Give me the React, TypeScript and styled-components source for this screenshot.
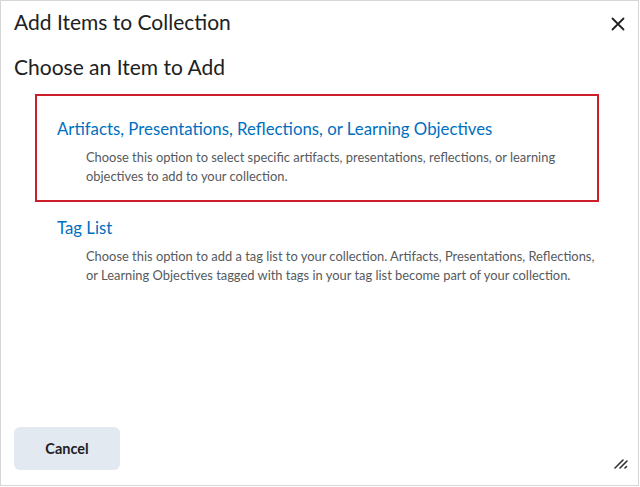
import React from "react";
import styled, { createGlobalStyle } from "styled-components";

const Global = createGlobalStyle`
  html, body { margin: 0; padding: 0; background: #fff; }
  body { font-family: Lato, "Noto Sans", sans-serif; }
  * { box-sizing: border-box; }
`;

const Dialog = styled.div`
  width: 639px;
  height: 486px;
  border: 1px solid #d6d6d6;
  background: #fff;
  display: flex;
  flex-direction: column;
  position: relative;
`;

const Header = styled.div`
  display: flex;
  align-items: flex-start;
  justify-content: space-between;
  padding: 7px 8px 0 13px;
`;

const Title = styled.h1`
  margin: 0;
  font-size: 21px;
  font-weight: 400;
  color: #202122;
  line-height: 28px;
`;

const CloseButton = styled.button`
  border: none;
  background: none;
  padding: 0;
  margin-top: 2px;
  width: 24px;
  height: 28px;
  display: flex;
  align-items: center;
  justify-content: center;
  cursor: pointer;
`;

const Body = styled.div`
  flex: 1;
  padding: 15px 13px 0 13px;
  display: flex;
  flex-direction: column;
`;

const Heading = styled.h2`
  margin: 0;
  font-size: 21px;
  font-weight: 400;
  color: #202122;
  line-height: 28px;
`;

const OptionList = styled.div`
  margin: 36px 0 0 43px;
  width: 542px;
  display: flex;
  flex-direction: column;
  gap: 30px;
`;

const Option = styled.div<{ $highlighted?: boolean }>`
  position: relative;

  &::after {
    content: "";
    display: ${(p) => (p.$highlighted ? "block" : "none")};
    position: absolute;
    top: -23px;
    bottom: -16px;
    left: -22px;
    right: 0;
    border: 2px solid #cd1f2b;
    pointer-events: none;
  }
`;

const OptionLink = styled.a`
  display: block;
  font-size: 16.8px;
  color: #006fbf;
  text-decoration: none;
  line-height: 24px;
  cursor: pointer;
`;

const OptionText = styled.p`
  margin: 7px 0 0 29px;
  font-size: 12.9px;
  line-height: 19px;
  color: #565a5c;
`;

const Footer = styled.div`
  padding: 0 13px 15px 13px;
  display: flex;
`;

const Cancel = styled.button`
  width: 106px;
  height: 43px;
  border: none;
  border-radius: 6px;
  background: #e3e9f1;
  font-family: Lato, "Noto Sans", sans-serif;
  font-size: 14.5px;
  font-weight: 700;
  color: #202122;
  cursor: pointer;
`;

const Resize = styled.div`
  position: absolute;
  right: 10px;
  bottom: 22px;
  width: 14px;
  height: 10px;
`;

export default function App() {
  return (
    <>
      <Global />
      <Dialog>
        <Header>
          <Title>Add Items to Collection</Title>
          <CloseButton aria-label="Close">
            <svg width="14" height="14" viewBox="0 0 14 14">
              <path d="M1.5 1.5 L12.5 12.5 M12.5 1.5 L1.5 12.5" stroke="#202122" strokeWidth="1.8" strokeLinecap="round" />
            </svg>
          </CloseButton>
        </Header>
        <Body>
          <Heading>Choose an Item to Add</Heading>
          <OptionList>
            <Option $highlighted>
              <OptionLink>Artifacts, Presentations, Reflections, or Learning Objectives</OptionLink>
              <OptionText>
                Choose this option to select specific artifacts, presentations, reflections, or learning objectives to add to your collection.
              </OptionText>
            </Option>
            <Option>
              <OptionLink>Tag List</OptionLink>
              <OptionText>
                Choose this option to add a tag list to your collection. Artifacts, Presentations, Reflections, or Learning Objectives tagged with tags in your tag list become part of your collection.
              </OptionText>
            </Option>
          </OptionList>
        </Body>
        <Footer>
          <Cancel>Cancel</Cancel>
        </Footer>
        <Resize>
          <svg width="14" height="10" viewBox="0 0 14 10">
            <path d="M1 9 L9 1 M6 9 L13 2 M11 9 L12.5 7.5" stroke="#333" strokeWidth="1.6" strokeLinecap="round" />
          </svg>
        </Resize>
      </Dialog>
    </>
  );
}
